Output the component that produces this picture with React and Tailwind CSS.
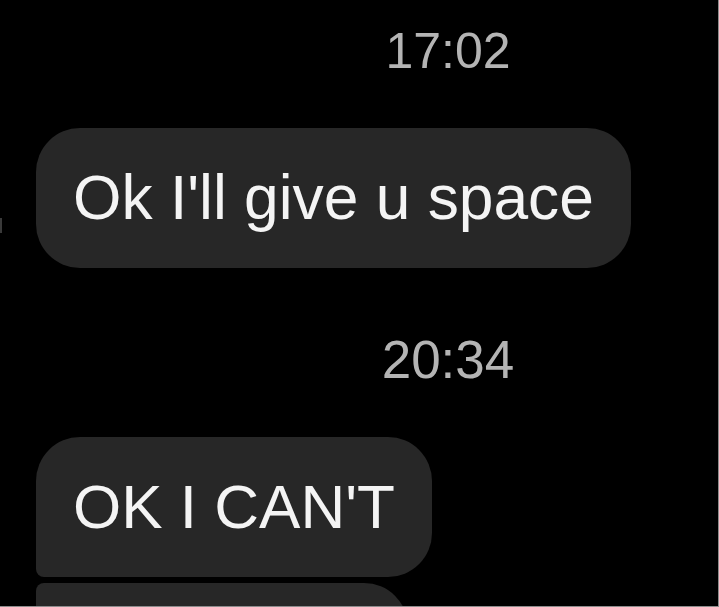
export default function App() {
  const font = { fontFamily: '"Liberation Sans", Arial, sans-serif' };
  return (
    <div
      className="relative w-[719px] h-[607px] overflow-hidden bg-black border-r border-b border-[#8c8c8c]"
      style={font}
    >
      <div className="absolute left-0 top-[218px] w-[2px] h-[15px] bg-[#3a3a3a]" />
      <div className="flex flex-col pt-[26px]">
        <div className="pl-[178px] text-center text-[50px] leading-none text-[#b4b4b4]">17:02</div>
        <div className="mt-[52px] pl-[36px] flex">
          <div className="rounded-[44px] bg-[#272727] px-[37px] py-[39px] text-[62.3px] leading-none text-[#f4f4f4] whitespace-nowrap">
            Ok I'll give u space
          </div>
        </div>
        <div className="mt-[65px] pl-[178px] text-center text-[53px] leading-none text-[#b4b4b4]">20:34</div>
        <div className="mt-[51px] pl-[36px] flex flex-col items-start gap-[6px]">
          <div className="rounded-tl-[44px] rounded-r-[44px] rounded-bl-[8px] bg-[#272727] px-[37px] py-[39px] text-[62px] leading-none text-[#f4f4f4] whitespace-nowrap">
            OK I CAN'T
          </div>
          <div className="w-[372px] h-[140px] rounded-tl-[8px] rounded-tr-[44px] rounded-b-[44px] bg-[#272727]" />
        </div>
      </div>
    </div>
  );
}
